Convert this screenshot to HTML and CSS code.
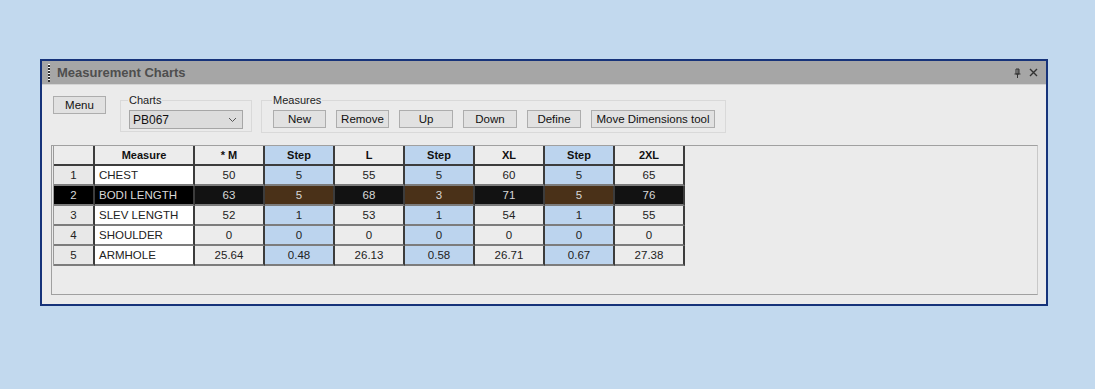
FILE: index.html
```html
<!DOCTYPE html>
<html lang="en">
<head>
	<meta charset="UTF-8">
	<title>Measurement Charts</title>
	<link rel="stylesheet" href="styles.css">
</head>
<body>
	<div class="win">
		<div class="titlebar">
			<span class="grip"></span>
			<span class="title">Measurement Charts</span>
			<span class="tb-icons">
				<svg width="9" height="10" viewBox="0 0 9 10"><path d="M3 1h3v5H3zM1.5 6h6M4.5 6v4M5 1v5" fill="none" stroke="#333" stroke-width="1"/></svg>
				<svg width="9" height="9" viewBox="0 0 9 9"><path d="M1 1l7 7M8 1l-7 7" stroke="#333" stroke-width="1.4"/></svg>
			</span>
		</div>
		<div class="content">
			<div class="toolbar">
				<button class="btn menu">Menu</button>
				<fieldset class="group charts">
					<legend>Charts</legend>
					<div class="select">
						<span>PB067</span>
						<svg width="9" height="6" viewBox="0 0 9 6"><path d="M1 1l3.5 3.5L8 1" fill="none" stroke="#555" stroke-width="1"/></svg>
					</div>
				</fieldset>
				<fieldset class="group measures">
					<legend>Measures</legend>
					<button class="btn">New</button>
					<button class="btn">Remove</button>
					<button class="btn">Up</button>
					<button class="btn">Down</button>
					<button class="btn">Define</button>
					<button class="btn wide">Move Dimensions tool</button>
				</fieldset>
			</div>
			<div class="grid">
				<table>
					<colgroup>
						<col class="c-num"><col class="c-name">
						<col class="c-val"><col class="c-val"><col class="c-val"><col class="c-val">
						<col class="c-val"><col class="c-val"><col class="c-val">
					</colgroup>
					<tr class="head">
						<th></th><th>Measure</th><th>* M</th><th class="step">Step</th><th>L</th>
						<th class="step">Step</th><th>XL</th><th class="step">Step</th><th>2XL</th>
					</tr>
					<tr>
						<td class="num">1</td><td class="name">CHEST</td><td>50</td><td class="step">5</td><td>55</td>
						<td class="step">5</td><td>60</td><td class="step">5</td><td>65</td>
					</tr>
					<tr class="sel">
						<td class="num">2</td><td class="name">BODI LENGTH</td><td>63</td><td class="step">5</td><td>68</td>
						<td class="step">3</td><td>71</td><td class="step">5</td><td>76</td>
					</tr>
					<tr>
						<td class="num">3</td><td class="name">SLEV LENGTH</td><td>52</td><td class="step">1</td><td>53</td>
						<td class="step">1</td><td>54</td><td class="step">1</td><td>55</td>
					</tr>
					<tr>
						<td class="num">4</td><td class="name">SHOULDER</td><td>0</td><td class="step">0</td><td>0</td>
						<td class="step">0</td><td>0</td><td class="step">0</td><td>0</td>
					</tr>
					<tr>
						<td class="num">5</td><td class="name">ARMHOLE</td><td>25.64</td><td class="step">0.48</td><td>26.13</td>
						<td class="step">0.58</td><td>26.71</td><td class="step">0.67</td><td>27.38</td>
					</tr>
				</table>
			</div>
		</div>
	</div>
</body>
</html>
```

FILE: styles.css
```css
*{
	margin: 0;
	padding: 0;
	box-sizing: border-box;
}
body{
	background: #c2d9ee;
	font-family: "Liberation Sans", Arial, sans-serif;
	padding: 59px 0 0 40px;
}
.win{
	width: 1008px;
	height: 247px;
	border: 2px solid #16337a;
	background: #ebebeb;
	display: flex;
	flex-direction: column;
}
.titlebar{
	height: 24px;
	background: #a6a6a6;
	border-bottom: 1px solid #d4d4d4;
	display: flex;
	align-items: center;
	padding: 0 8px 0 6px;
}
.grip{
	width: 2px;
	height: 18px;
	background: repeating-linear-gradient(#fff 0 1px, #333 1px 3px);
	margin-right: 7px;
}
.title{
	font-weight: bold;
	font-size: 13px;
	color: #4e4e4e;
	flex: 1;
}
.tb-icons{
	display: flex;
	gap: 7px;
	align-items: center;
}
.content{
	flex: 1;
	display: flex;
	flex-direction: column;
	padding: 10px 8px 9px 9px;
}
.toolbar{
	display: flex;
	align-items: flex-start;
	height: 40px;
}
.btn{
	font-family: "Liberation Sans", Arial, sans-serif;
	font-size: 11.5px;
	color: #111;
	background: #e1e1e1;
	border: 1px solid #adadad;
	height: 18px;
	width: 53px;
	line-height: 16px;
	flex: none;
}
.menu{
	margin: 1px 14px 0 2px;
}
.group{
	border: 1px solid #d9d9d9;
	display: flex;
	gap: 10px;
	padding: 5px 8px 0;
	height: 37px;
}
.group legend{
	font-size: 11px;
	color: #222;
	padding: 0 1px;
	margin-left: -1px;
	line-height: 10px;
}
.charts{
	width: 129px;
	margin-right: 9px;
}
.measures{
	width: 465px;
	padding-left: 11px;
	height: 38px;
}
.measures .btn:nth-child(4),
.measures .btn:nth-child(5),
.measures .btn:nth-child(6){
	width: 54px;
}
.wide{
	width: 124px !important;
}
.select{
	width: 114px;
	height: 19px;
	background: #dcdcdc;
	border: 1px solid #a6a6a6;
	font-size: 12px;
	display: flex;
	align-items: center;
	justify-content: space-between;
	padding: 0 5px 0 3px;
	color: #111;
}
.grid{
	flex: 1;
	margin-top: 10px;
	border: 1px solid #a0a0a0;
	border-right-color: #c8c8c8;
	padding: 0 0 0 1px;
}
table{
	border-collapse: separate;
	border-spacing: 0;
	table-layout: fixed;
	border-left: 1px solid #9a9a9a;
	font-size: 11.5px;
}
.c-num{ width: 41px; }
.c-name{ width: 100px; }
.c-val{ width: 70px; }
th, td{
	height: 20px;
	border-right: 2px solid #3c3c3c;
	border-bottom: 2px solid #7c7c7c;
	text-align: center;
	background: #ececec;
	color: #222;
	font-weight: normal;
	white-space: nowrap;
	overflow: hidden;
}
th{
	font-weight: bold;
	font-size: 11px;
	color: #111;
	border-bottom-color: #3c3c3c;
}
.step{
	background: #bcd4ee;
}
td.name{
	background: #fff;
	text-align: left;
	padding-left: 4px;
}
td.num{
	background: #e8e8e8;
}
.sel td{
	background: #121212;
	color: #d8d8d8;
}
.sel td.num, .sel td.name{
	background: #000;
}
.sel td.step{
	background: #4a3118;
}
```
